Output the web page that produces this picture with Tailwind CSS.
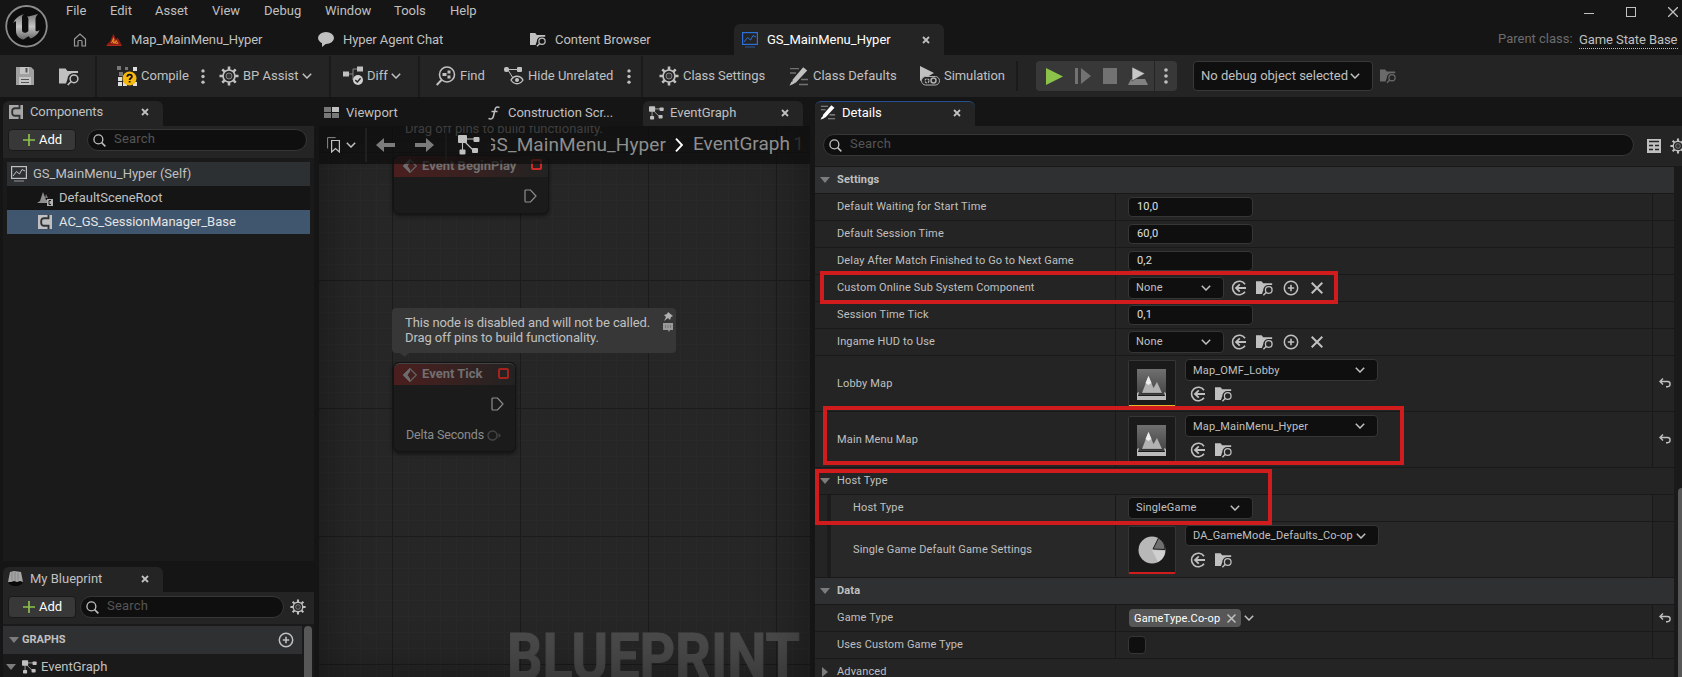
<!DOCTYPE html>
<html lang="en">
<head>
    <meta charset="UTF-8">
    <meta name="viewport" content="width=device-width, initial-scale=1.0">
    <title>GS_MainMenu_Hyper</title>
    <script src="https://cdn.jsdelivr.net/npm/@tailwindcss/browser@4"></script>
</head>
<body class="w-[1682px] h-[677px] overflow-hidden bg-[#151515] font-[Roboto,sans-serif] text-[13px] leading-4 text-[#c0c0c0] whitespace-nowrap">
    <!-- Icon sprites -->
    <svg class="absolute w-0 h-0">
        <symbol id="chev" viewBox="0 0 10 6"><path d="M.8.8 5 5 9.2.8" fill="none" stroke="currentColor" stroke-width="1.5"/></symbol>
        <symbol id="close" viewBox="0 0 8 8"><path d="M1 1l6 6M7 1L1 7" stroke="currentColor" stroke-width="1.8"/></symbol>
        <symbol id="clear" viewBox="0 0 12 12"><path d="M.7.7l10.6 10.6M11.3.7L.7 11.3" stroke="currentColor" stroke-width="2"/></symbol>
        <symbol id="dots" viewBox="0 0 4 16"><circle cx="2" cy="2" r="1.8" fill="currentColor"/><circle cx="2" cy="8" r="1.8" fill="currentColor"/><circle cx="2" cy="14" r="1.8" fill="currentColor"/></symbol>
        <symbol id="mag" viewBox="0 0 14 14"><circle cx="5.8" cy="5.8" r="4.8" fill="none" stroke="currentColor" stroke-width="1.4"/><path d="M9.3 9.3l4 4" stroke="currentColor" stroke-width="1.6"/></symbol>
        <symbol id="gear" viewBox="0 0 20 20"><g stroke="currentColor" stroke-width="2.6"><path d="M10 .5v4M10 15.500v4M.5 10h4M15.500 10h4M3.300 3.300l2.800 2.800M13.900 13.900l2.800 2.800M3.300 16.700l2.800-2.800M13.900 6.100l2.800-2.800"/></g><circle cx="10" cy="10" r="6" fill="#242424" stroke="currentColor" stroke-width="1.700"/><circle cx="10" cy="10" r="3" fill="#333" stroke="currentColor" stroke-opacity=".6" stroke-width="1"/></symbol>
        <symbol id="folder" viewBox="0 0 20 18"><path d="M0 1h6.500l2 2.500H19v2h-4.500a6 6 0 0 0-6 6l-1.500 4.500H0z" fill="currentColor"/><circle cx="15" cy="11.300" r="3.900" fill="none" stroke="currentColor" stroke-width="1.500"/><path d="M12.200 14l-3.500 3.500" stroke="currentColor" stroke-width="1.700"/></symbol>
        <symbol id="use" viewBox="0 0 16 16"><path d="M14 4.200A6.800 6.800 0 1 0 14 11.800" fill="none" stroke="currentColor" stroke-width="1.600"/><path d="M15 8H5.500M8.800 4.400L5 8l3.800 3.600" fill="none" stroke="currentColor" stroke-width="1.800"/></symbol>
        <symbol id="plusc" viewBox="0 0 16 16"><circle cx="8" cy="8" r="6.700" fill="none" stroke="currentColor" stroke-width="1.500"/><path d="M8 4.800v6.400M4.800 8h6.400" stroke="currentColor" stroke-width="1.600"/></symbol>
        <symbol id="plus" viewBox="0 0 12 12"><path d="M6 0v12M0 6h12" stroke="#8bc24a" stroke-width="1.700"/></symbol>
        <symbol id="reset" viewBox="0 0 12 10"><path d="M4 .5L1 3.500l3 3M1 3.500h7.500a2.600 2.600 0 0 1 0 5.200H7" fill="none" stroke="currentColor" stroke-width="1.400"/></symbol>
        <symbol id="graph" viewBox="0 0 22 20"><path d="M5 4h13M7 7l8 8M4.500 7v9" stroke="currentColor" stroke-width="1.100"/><rect x="0" y="0" width="9" height="8" rx="1" fill="currentColor"/><rect x="15.500" y="2" width="6" height="5" rx="1" fill="currentColor"/><rect x="1.500" y="14.500" width="6" height="5" rx="1" fill="currentColor"/><rect x="14" y="13" width="6" height="5" rx="1" fill="currentColor"/></symbol>
        <symbol id="bp" viewBox="0 0 16 16"><rect x=".6" y=".6" width="14.800" height="11.800" fill="none" stroke="currentColor" stroke-width="1.200"/><path d="M2 10l3.500-4.500 3 2.500 2.500-4.500L14 5" fill="none" stroke="currentColor" stroke-width="1"/><path d="M3 15h10" stroke="currentColor" stroke-opacity=".5" stroke-width="1.400"/></symbol>
        <symbol id="comp" viewBox="0 0 14 14"><path d="M0 0h14v14H0z" fill="currentColor"/><path d="M9.500 3.200H6a2.800 2.800 0 0 0-2.800 2.800v2A2.800 2.800 0 0 0 6 10.800h3.500M10.500 0v4.200M10.500 9.800V14" fill="none" stroke="#303336" stroke-width="1.900"/></symbol>
        <symbol id="pencil" viewBox="0 0 20 19"><path d="M1 1.700h9M1 6h6M12 12.500h7M10 17.500h9" stroke="currentColor" stroke-opacity=".5" stroke-width="1.300"/><path d="M14.200.3l4 3.200L7 15.500 2.500 17.700 3.800 12.500z" fill="currentColor"/><path d="M.5 18.700l2-4.200 2.500 2z" fill="currentColor"/></symbol>
        <symbol id="tri" viewBox="0 0 10 6"><path d="M0 0h10L5 6z" fill="#7c7c7c"/></symbol>
        <symbol id="exec" viewBox="0 0 13 14"><path d="M1 2a1 1 0 0 1 1-1h4.500L12 7l-5.500 6H2a1 1 0 0 1-1-1z" fill="none" stroke="#8e8e8e" stroke-width="1.200"/></symbol>
        <symbol id="event" viewBox="0 0 14 14"><path d="M7 .7L13.300 7 7 13.300.7 7z" fill="none" stroke="#626262" stroke-width="1.300"/><path d="M7 0v3.500L4.500 7 7 10.500V14L0 7z" fill="#6d6d6d"/></symbol>
        <linearGradient id="lg" x2="0" y2="1"><stop stop-color="#707070"/><stop offset="1" stop-color="#444"/></linearGradient>
        <symbol id="level" viewBox="0 0 29 31"><path d="M0 0h29v26H0z" fill="url(#lg)"/><path d="M5 24l6.500-17 5 12 3.500-6 5 11z" fill="#b2b2b2"/><path d="M8.500 14l3-7 3 7-3 2z" fill="#eee"/><path d="M3.500 24.500h22" stroke="#333" stroke-width="1.200"/><path d="M0 31v-7l2-1-1 4h27l-1-4 2 1v7z" fill="#bbb"/></symbol>
    </svg>

    <!-- Title bar: logo, menu, asset tabs -->
    <header class="flex h-[55px]">
        <svg class="w-[44px] h-[44px] mt-1 ml-[4px] shrink-0" viewBox="0 0 44 44">
            <linearGradient id="ug" x2="0" y2="1"><stop stop-color="#777"/><stop offset=".5" stop-color="#c4c4c4"/><stop offset="1" stop-color="#666"/></linearGradient>
            <circle cx="22.500" cy="22.300" r="20.300" fill="#0d0d0d" stroke="#8c8c8c" stroke-width="1.800"/>
            <path d="M9 19.500c2-5 6-8 11-9.500-1.600 1.300-2 2.200-2 3.500v12.500c0 1.800 1.200 2.700 2.800 2.700 1.500 0 2.600-.7 3.600-1.800V15c0-1.300-.5-2-1.800-2.300 4-.6 7.500-1.700 11.600-3-1.800 2-2.700 3.500-2.700 5.500v10.500c0 1.300.8 1.700 1.800 1.500.8-.2 1.600-.7 2.300-1.300-1.600 4.300-5 7-9 8.500l-2.200-2.200-4.800 3.300c-4.500-.5-7.600-3.800-7.600-8.500v-9c0-1.300-1.200-1.300-3 1.500z" fill="url(#ug)"/>
        </svg>
        <div class="flex-1">
            <nav class="flex h-6 pl-[18px] pt-[3px]">
                <span class="w-[44px]">File</span><span class="w-[45px]">Edit</span><span class="w-[57px]">Asset</span><span class="w-[52px]">View</span><span class="w-[61px]">Debug</span><span class="w-[69px]">Window</span><span class="w-[56px]">Tools</span><span>Help</span>
                <div class="ml-auto flex items-center mr-[4px] -mt-[3px] gap-[32px]">
                    <div class="w-[10px] h-px bg-[#c0c0c0] mt-[2px]"></div>
                    <div class="w-[10px] h-[10px] border border-[#c0c0c0]"></div>
                    <svg class="w-[10px] h-[10px]" viewBox="0 0 10 10"><path d="M0 0l10 10M10 0L0 10" stroke="#c0c0c0" stroke-width="1.300"/></svg>
                </div>
            </nav>
            <div class="flex h-[31px] items-center">
                <svg class="w-[14px] h-[14px] ml-[25px]" viewBox="0 0 14 14"><path d="M1.500 6L7 1l5.500 5v7H9V8.500a1 1 0 0 0-1-1H6a1 1 0 0 0-1 1V13H1.500z" fill="none" stroke="#999" stroke-width="1.200"/></svg>
                <svg class="w-[16px] h-[14px] ml-[19px]" viewBox="0 0 16 14"><path d="M0 13l2.500-3.500h1l4-9 2.500 6 1.500-2 3 5L16 13z" fill="#8f1d14"/><path d="M5 10l2.500-6 1.500 4 1.500-1 2 4z" fill="#e08a22"/><path d="M6 9l1 1M8 7l1 2M10 9l1 1M1 12.500h14" stroke="#b02a1a"/></svg>
                <span class="w-[187px] ml-[9px] tracking-[-.08px]">Map_MainMenu_Hyper</span>
                <svg class="w-[16px] h-[15px]" viewBox="0 0 16 15"><ellipse cx="8" cy="6" rx="8" ry="6" fill="currentColor"/><path d="M4 10v5l5-4z" fill="currentColor"/></svg>
                <span class="w-[187px] ml-[9px] tracking-[-.08px]">Hyper Agent Chat</span>
                <svg class="w-[16px] h-[15px]"><use href="#folder"/></svg>
                <span class="w-[179px] ml-[9px] tracking-[-.05px]">Content Browser</span>
                <div class="flex items-center w-[210px] h-[31px] rounded-t-md bg-[#242424] pl-2 text-white">
                    <svg class="w-[16px] h-[16px] text-[#2d71d8]"><use href="#bp"/></svg>
                    <span class="w-[155px] ml-[9px]">GS_MainMenu_Hyper</span>
                    <svg class="w-[8px] h-[8px] text-[#c0c0c0]"><use href="#close"/></svg>
                </div>
                <span class="ml-auto text-[#6c6c6c] w-[81px] -mt-px">Parent class:</span>
                <span class="w-[99px] mr-[4px] border-b border-dotted border-[#c0c0c0] h-[17px] mt-px tracking-[-.08px]">Game State Base</span>
            </div>
        </div>
    </header>

    <!-- Toolbar -->
    <div class="flex items-center h-[42px] bg-[#242424] [&>*]:shrink-0">
        <svg class="w-[18px] h-[18px] ml-4" viewBox="0 0 18 18"><path d="M0 0h15l3 3v15H0z" fill="#a0a0a0"/><path d="M4 0h9v7H4zM3 10h12v8H3z" fill="#c4c4c4"/><path d="M9.500 1h2v4.500h-2zM5 12h8v1H5zM5 15h8v1H5z" fill="#555"/></svg>
        <svg class="w-[20px] h-[19px] ml-[25px]"><use href="#folder"/></svg>
        <div class="w-[2px] h-[41px] bg-[#1a1a1a] ml-[16px]"></div>
        <svg class="w-[21px] h-[21px] ml-[20px]" viewBox="0 0 21 21"><path d="M0 0h4v4H0zM8 1h3v3H8zM2 6h4v4H2z" fill="#777"/><path d="M16 1h4v4h-4zM1 11h4v4H1zM1 16h4v4H1zM6 16h4v4H6zM16 16h4v4h-4z" fill="#ddd"/><circle cx="12.500" cy="12.500" r="7" fill="#f8b90e"/><path d="M10.300 10.800c0-3 4.600-2.900 4.600-.3 0 1.700-2.300 1.700-2.300 3.400M12.600 15v1.600" fill="none" stroke="#111" stroke-width="1.800"/></svg>
        <span class="ml-[3px] w-[60px]">Compile</span>
        <svg class="w-[4px] h-[15px]"><use href="#dots"/></svg>
        <svg class="w-[20px] h-[20px] ml-[14px]"><use href="#gear"/></svg>
        <span class="ml-[4px] w-[59px]">BP Assist</span>
        <svg class="w-[10px] h-[6px]"><use href="#chev"/></svg>
        <div class="w-[2px] h-[41px] bg-[#1a1a1a] ml-[17px]"></div>
        <svg class="w-[20px] h-[20px] ml-[12px]" viewBox="0 0 20 20"><path d="M3 8h7V3h6M10 8v6" fill="none" stroke="#888"/><path d="M0 5.500h6v5H0zM14 .5h6v5h-6z" fill="#c0c0c0"/><circle cx="15" cy="14" r="5" fill="#d0d0d0"/><path d="M12.300 14l2 2 3.300-3.800" fill="none" stroke="#222" stroke-width="1.400"/></svg>
        <span class="ml-[4px] w-[24px]">Diff</span>
        <svg class="w-[10px] h-[6px]"><use href="#chev"/></svg>
        <div class="w-[2px] h-[41px] bg-[#1a1a1a] ml-[17px]"></div>
        <svg class="w-[20px] h-[20px] ml-[16px]" viewBox="0 0 20 20"><circle cx="11" cy="8.500" r="7.500" fill="none" stroke="#c0c0c0" stroke-width="1.600"/><path d="M5.500 14L.7 19" stroke="#c0c0c0" stroke-width="2"/><path d="M6.500 7h4v3h-4zM11.500 4.500h3v3h-3zM11.500 9.500h3v3h-3z" fill="#c0c0c0"/></svg>
        <span class="ml-[4px] w-[43px]">Find</span>
        <svg class="w-[20px] h-[18px] ml-px" viewBox="0 0 20 18"><path d="M3 2.500h13M4 3l5 8" fill="none" stroke="#c0c0c0"/><rect y="0" width="5" height="5" rx="2" fill="#c0c0c0"/><rect x="13" y="0" width="5" height="5" rx="1" fill="#c0c0c0"/><path d="M7 13c3-5 9-5 12 0-3 5-9 5-12 0z" fill="#242424" stroke="#c0c0c0" stroke-width="1.400"/><circle cx="13" cy="13" r="2" fill="#c0c0c0"/></svg>
        <span class="ml-[4px] w-[99px]">Hide Unrelated</span>
        <svg class="w-[4px] h-[15px]"><use href="#dots"/></svg>
        <div class="w-[2px] h-[41px] bg-[#1a1a1a] ml-[10px]"></div>
        <svg class="w-[20px] h-[20px] ml-[16px]"><use href="#gear"/></svg>
        <span class="ml-[4px] w-[106px] tracking-[-.05px]">Class Settings</span>
        <svg class="w-[20px] h-[19px]"><use href="#pencil"/></svg>
        <span class="ml-[4px] w-[106px]">Class Defaults</span>
        <svg class="w-[21px] h-[20px]" viewBox="0 0 21 20"><path d="M1 0l14 7L1 15z" fill="#c0c0c0"/><rect x="2.500" y="10.500" width="18" height="8.500" rx="4.200" fill="#242424" stroke="#b0b0b0"/><circle cx="8" cy="14.800" r="2" fill="none" stroke="#b0b0b0" stroke-dasharray="2 1" stroke-width="1.300"/><circle cx="14.500" cy="14.500" r="2.500" fill="none" stroke="#b0b0b0" stroke-width="1.500"/></svg>
        <span class="ml-[4px] w-[72px] tracking-[-.08px]">Simulation</span>
        <div class="w-[2px] h-[30px] bg-[#1a1a1a]"></div>
        <div class="flex items-center ml-[18px] w-[141px] h-[30px] rounded bg-[#383838]">
            <svg class="w-[17px] h-[17px] ml-[10px]" viewBox="0 0 17 17"><path d="M0 0l17 8.500L0 17z" fill="#8bc24a"/></svg>
            <svg class="w-[16px] h-[16px] ml-[12px]" viewBox="0 0 16 16"><path d="M0 0h3v16H0zM6 0l10 8-10 8z" fill="#727272"/></svg>
            <div class="w-[14px] h-[16px] ml-[12px] bg-[#727272]"></div>
            <svg class="w-[20px] h-[18px] ml-[11px]" viewBox="0 0 20 18"><path d="M3 12h14l3 6H0z" fill="#828282"/><path d="M4 0l13 6.500L4 14z" fill="#c8c8c8" stroke="#383838" stroke-width=".6"/></svg>
            <div class="w-px h-[30px] ml-[6px] bg-[#242424]"></div>
            <svg class="w-[4px] h-[16px] ml-[9px]"><use href="#dots"/></svg>
        </div>
        <div class="flex items-center ml-[16px] w-[180px] h-[30px] rounded border border-[#383838] bg-[#0f0f0f] pl-[7px]">
            <span class="w-[149px]">No debug object selected</span>
            <svg class="w-[10px] h-[6px]"><use href="#chev"/></svg>
        </div>
        <svg class="w-[16px] h-[16px] ml-[7px] text-[#6a6a6a]"><use href="#folder"/></svg>
    </div>

    <main class="flex h-[580px]">
        <!-- Left column -->
        <aside class="w-[311px] ml-[3px] shrink-0">
            <div class="mt-1 flex items-center w-[160px] h-[25px] rounded-t-md bg-[#242424] pl-[6px] pb-[3px]">
                <svg class="w-[14px] h-[14px] text-[#a8a8a8]"><use href="#comp"/></svg>
                <span class="ml-[7px] w-[111px] tracking-[-.12px]">Components</span>
                <svg class="w-[8px] h-[8px]"><use href="#close"/></svg>
            </div>
            <div class="flex h-[32px] bg-[#242424] pl-[5px] pt-[3px]">
                <button class="flex items-center w-[68px] h-[22px] rounded border border-[#191919] bg-[#383838] pl-[14px] text-white"><svg class="w-[12px] h-[12px]"><use href="#plus"/></svg><span class="ml-[4px] -mt-px">Add</span></button>
                <div class="flex items-center ml-[11px] w-[220px] h-[22px] rounded-full border border-[#363636] bg-[#0f0f0f] pl-[5px] text-[#555]"><svg class="w-[13px] h-[13px] text-[#c0c0c0]"><use href="#mag"/></svg><span class="ml-[8px] -mt-[2px] tracking-[.2px]">Search</span></div>
            </div>
            <div class="h-[403px] bg-[#1a1a1a] pt-[4px] pl-[4px] pr-[4px]">
                <div class="flex items-center h-[24px] bg-[#2d3033] pl-[4px]"><svg class="w-[16px] h-[16px]"><use href="#bp"/></svg><span class="ml-[6px]">GS_MainMenu_Hyper (Self)</span></div>
                <div class="flex items-center h-[24px] bg-[#151515] pl-[30px]">
                    <svg class="w-[16px] h-[15px]" viewBox="0 0 16 15"><path d="M0 12l3-2 3-9 3 8h1v3z" fill="#909090"/><path d="M9 3l2 4H8z" fill="#777"/><path d="M10 8h6v7h-6z" fill="#b0b0b0"/><path d="M14 9.500h-2v4h2" fill="none" stroke="#151515"/></svg>
                    <span class="ml-[6px] tracking-[-.05px]">DefaultSceneRoot</span>
                </div>
                <div class="flex items-center h-[24px] bg-[#40566e] pl-[31px] text-[#e4e4e4]"><svg class="w-[14px] h-[14px] text-[#c0c0c0]"><use href="#comp"/></svg><span class="ml-[7px]">AC_GS_SessionManager_Base</span></div>
            </div>
            <div class="mt-[6px] flex items-center w-[160px] h-[25px] rounded-t-md bg-[#242424] pl-[5px] pb-[2px]">
                <svg class="w-[15px] h-[15px]" viewBox="0 0 15 15"><path d="M0 9h15l-1 4-4 2H5l-4-2z" fill="#090909"/><path d="M0 11L2 1l4-1 7 1 2 10-3-1-3 1-3-1-3 1z" fill="#a5a5a5"/><path d="M4 1v8M7 1v9M10 2v7" stroke="#777" stroke-width=".7"/></svg>
                <span class="ml-[7px] w-[111px]">My Blueprint</span>
                <svg class="w-[8px] h-[8px]"><use href="#close"/></svg>
            </div>
            <div class="flex h-[32px] bg-[#242424] pl-[5px] pt-[4px]">
                <button class="flex items-center w-[68px] h-[22px] rounded border border-[#191919] bg-[#383838] pl-[14px] text-white"><svg class="w-[12px] h-[12px]"><use href="#plus"/></svg><span class="ml-[4px] -mt-px">Add</span></button>
                <div class="flex items-center ml-[4px] w-[204px] h-[22px] rounded-full border border-[#363636] bg-[#0f0f0f] pl-[5px] text-[#555]"><svg class="w-[13px] h-[13px] text-[#c0c0c0]"><use href="#mag"/></svg><span class="ml-[8px] -mt-[2px] tracking-[.2px]">Search</span></div>
                <svg class="w-[16px] h-[16px] ml-[6px] mt-[3px]"><use href="#gear"/></svg>
            </div>
            <div class="flex h-[53px] bg-[#1a1a1a] pt-[2px]">
                <div class="w-[299px]">
                    <div class="flex items-center h-[28px] bg-[#2f3031] pl-[6px]"><svg class="w-[10px] h-[6px]"><use href="#tri"/></svg><span class="ml-[3px] -mt-px w-[256px] text-[11px] font-bold">GRAPHS</span><svg class="w-[16px] h-[16px]"><use href="#plusc"/></svg></div>
                    <div class="flex items-center h-[25px] pl-[3px]"><svg class="w-[10px] h-[6px]"><use href="#tri"/></svg><svg class="w-[15px] h-[14px] ml-[6px]"><use href="#graph"/></svg><span class="ml-[4px]">EventGraph</span></div>
                </div>
                <div class="w-[8px] ml-[2px] rounded-t bg-[#575757]"></div>
            </div>
        </aside>

        <!-- Graph editor -->
        <section class="w-[491px] ml-[5px] shrink-0">
            <div class="flex items-center h-[29px] pt-[2px]">
                <svg class="w-[15px] h-[11px] ml-[5px]" viewBox="0 0 15 11"><path d="M0 0h7v5H0zM0 6h7v5H0zM8 6h7v5H8z" fill="#777"/><path d="M8 0h7v5H8z" fill="#c0c0c0"/></svg>
                <span class="ml-[7px] w-[142px]">Viewport</span>
                <svg class="w-[12px] h-[14px]" viewBox="0 0 12 14"><path d="M11.500 1.500C8 0 7.300 2 6.800 4.500L5.500 10c-.6 2.500-2 3.500-5 2.500M3.500 5.500h6" fill="none" stroke="currentColor" stroke-width="1.500"/></svg>
                <span class="ml-[8px] w-[135px] tracking-[-.05px]">Construction Scr...</span>
                <div class="flex items-center w-[160px] h-[25px] mt-[2px] rounded-t-md bg-[#242424] pl-[6px] pb-[2px]">
                    <svg class="w-[15px] h-[14px]"><use href="#graph"/></svg>
                    <span class="ml-[6px] w-[111px]">EventGraph</span>
                    <svg class="w-[8px] h-[8px]"><use href="#close"/></svg>
                </div>
            </div>
            <div class="relative h-[551px] overflow-hidden bg-[#262626]">
                <svg class="absolute inset-0 w-full h-full">
                    <defs>
                        <pattern id="fine" x="73" y="10" width="16" height="16" patternUnits="userSpaceOnUse"><path d="M.5 0v16M0 .5h16" stroke="#292929"/></pattern>
                        <pattern id="coarse" x="73" y="26" width="128" height="128" patternUnits="userSpaceOnUse"><path d="M.5 0v128M0 .5h128" stroke="#1b1b1b"/></pattern>
                    </defs>
                    <rect width="100%" height="100%" fill="url(#fine)"/>
                    <rect width="100%" height="100%" fill="url(#coarse)"/>
                    <text x="188" y="553" font-size="65" font-weight="700" textLength="293" lengthAdjust="spacingAndGlyphs" fill="#4a4a4a" stroke="#4a4a4a" stroke-width="1">BLUEPRINT</text>
                </svg>
                <div class="absolute inset-0 shadow-[inset_0_0_50px_rgba(0,0,0,0.4)]"></div>

                <div class="absolute left-[86px] top-[-5px] text-[#b0b0b0]">Drag off pins to build functionality.</div>
                <!-- Event BeginPlay -->
                <div class="absolute left-[74px] top-[29px] w-[156px] h-[59px] rounded-md border border-[#141414] bg-[#1b1b1b] shadow-[0_2px_4px_rgba(0,0,0,0.5)]">
                    <div class="flex items-center h-[21px] rounded-t-md bg-linear-to-r from-[#4b1e1e] to-[#222] pl-[9px] pb-px">
                        <svg class="w-[14px] h-[14px]"><use href="#event"/></svg>
                        <span class="ml-[5px] -mt-px w-[109px] font-bold text-[#707070]">Event BeginPlay</span>
                        <div class="w-[11px] h-[11px] rounded-xs border-2 border-[#d02a24] -mt-[3px]"></div>
                    </div>
                    <svg class="ml-[130px] mt-[12px] w-[13px] h-[14px]"><use href="#exec"/></svg>
                </div>
                <!-- Comment bubble -->
                <div class="absolute left-[73px] top-[182px] w-[284px] h-[45px] rounded bg-[#373737] pl-[13px] pt-[7px] leading-[15px] tracking-[-.11px]">
                    This node is disabled and will not be called.<br>Drag off pins to build functionality.
                    <svg class="absolute left-[8px] top-[45px] w-[9px] h-[4px]" viewBox="0 0 9 4"><path d="M0 0h9L4.500 4z" fill="#373737"/></svg>
                    <svg class="absolute right-[3px] top-[4px] w-[10px] h-[20px]" viewBox="0 0 10 20"><path d="M5 0l5 4-2 1-1 3-2-2-4 3 2-4-2-2 3-1z" fill="#b0b0b0"/><path d="M0 11h10v7H7l-1 2-1-2H0z" fill="#9a9a9a"/><path d="M2.500 13v3M5 13v3M7.500 13v3" stroke="#777"/></svg>
                </div>
                <!-- Event Tick -->
                <div class="absolute left-[74px] top-[236px] w-[123px] h-[90px] rounded-md border border-[#141414] bg-[#1b1b1b] shadow-[0_2px_4px_rgba(0,0,0,0.5)]">
                    <div class="flex items-center h-[22px] rounded-t-md border-t border-[#444] bg-linear-to-r from-[#4b1e1e] to-[#222] pl-[9px]">
                        <svg class="w-[14px] h-[14px]"><use href="#event"/></svg>
                        <span class="ml-[5px] -mt-[2px] w-[76px] font-bold text-[#707070]">Event Tick</span>
                        <div class="w-[11px] h-[11px] rounded-xs border-2 border-[#a4231f] -mt-[2px]"></div>
                    </div>
                    <svg class="ml-[97px] mt-[12px] w-[13px] h-[14px]"><use href="#exec"/></svg>
                    <div class="flex items-center mt-[16px] ml-[12px] text-[#8c8c8c]"><span class="w-[81px] text-[12.5px] tracking-[-.15px]">Delta Seconds</span><svg class="w-[14px] h-[11px]" viewBox="0 0 14 11"><circle cx="5.500" cy="5.500" r="4.500" fill="none" stroke="#444" stroke-width="1.500"/><path d="M11.500 3l2.500 2.500L11.500 8z" fill="#444"/></svg></div>
                </div>

                <!-- Breadcrumb bar -->
                <div class="absolute inset-x-0 top-0 flex items-center h-[38px] bg-[#0d0d0d]/70 text-[#8e8e8e] text-[19px] leading-6">
                    <svg class="w-[14px] h-[16px] ml-[8px]" viewBox="0 0 14 16"><path d="M.6 11.500V.6h8" fill="none" stroke="#888"/><path d="M4.600 3.500h7.800v11.500l-3.900-3.500L4.600 15z" fill="none" stroke="#c0c0c0" stroke-width="1.200"/></svg>
                    <svg class="w-[10px] h-[6px] ml-[5px] text-[#c0c0c0]"><use href="#chev"/></svg>
                    <div class="w-[2px] h-[34px] ml-[9px] bg-[#202020]"></div>
                    <svg class="w-[19px] h-[14px] ml-[9px]" viewBox="0 0 19 14"><path d="M0 7l8-7v5h11v4H8v5z" fill="#7c7c7c"/></svg>
                    <svg class="w-[19px] h-[14px] ml-[20px]" viewBox="0 0 19 14"><path d="M19 7l-8-7v5H0v4h11v5z" fill="#7c7c7c"/></svg>
                    <div class="w-[2px] h-[34px] ml-[11px] bg-[#191919]"></div>
                    <svg class="w-[22px] h-[20px] ml-[11px] text-[#c0c0c0]"><use href="#graph"/></svg>
                    <div class="flex justify-end ml-[11px] w-[175px] overflow-hidden"><span class="tracking-[.1px]">GS_MainMenu_Hyper</span></div>
                    <svg class="w-[8px] h-[14px] ml-[9px] shrink-0" viewBox="0 0 8 14"><path d="M1 .7L7 7l-6 6.300" fill="none" stroke="#fff" stroke-width="1.900"/></svg>
                    <span class="ml-[10px] -mt-[2px]">EventGraph</span>
                    <span class="absolute right-[6px] top-[6px] text-[#2c2c2c]">1</span>
                </div>
            </div>
        </section>

        <!-- Details panel -->
        <section class="relative w-[867px] ml-[5px] shrink-0 text-[11px]">
            <div class="mt-1 flex items-center w-[160px] h-[25px] rounded-t-md bg-[#242424] border-t border-[#24508f] pl-[5px] pb-[3px] text-[13px] text-white">
                <svg class="w-[16px] h-[15px]"><use href="#pencil"/></svg>
                <span class="ml-[6px] w-[111px]">Details</span>
                <svg class="w-[8px] h-[8px] text-[#c0c0c0]"><use href="#close"/></svg>
            </div>
            <div class="flex items-center h-[40px] bg-[#242424] pl-[8px] overflow-hidden [&>*]:shrink-0">
                <div class="flex items-center w-[811px] h-[22px] -mt-[2px] rounded-full border border-[#363636] bg-[#0f0f0f] pl-[5px] text-[13px] text-[#555]"><svg class="w-[13px] h-[13px] text-[#c0c0c0]"><use href="#mag"/></svg><span class="ml-[8px] -mt-[2px] tracking-[.2px]">Search</span></div>
                <svg class="w-[14px] h-[14px] ml-[13px] -mt-px" viewBox="0 0 14 14"><path d="M0 0h14v14H0z" fill="#c0c0c0"/><path d="M2 2.500h10M2 6.500h4M8 6.500h4M2 10.500h4M8 10.500h4" stroke="#242424" stroke-width="1.700"/></svg>
                <svg class="w-[16px] h-[16px] ml-[9px] -mt-px"><use href="#gear"/></svg>
            </div>
            <div class="flex h-[511px] bg-[#1a1a1a]">
                <div class="w-[859px] [&>div]:border-t [&>div]:border-[#191919] [&>div]:flex [&>div]:items-center tracking-[.15px]">
                    <div class="h-[27px] bg-[#2f3031] pl-[5px]"><svg class="w-[10px] h-[6px]"><use href="#tri"/></svg><span class="ml-[7px] font-bold">Settings</span></div>

                    <div class="h-[27px] bg-[#242424]">
                        <span class="w-[300px] pl-[22px]">Default Waiting for Start Time</span>
                        <div class="flex items-center self-stretch w-[538px] border-x border-[#191919] pl-[12px]"><div class="w-[125px] h-[20px] rounded border border-[#363636] bg-[#0f0f0f] pl-[8px] leading-[18px] text-[#e0e0e0]">10,0</div></div>
                    </div>
                    <div class="h-[27px] bg-[#242424]">
                        <span class="w-[300px] pl-[22px]">Default Session Time</span>
                        <div class="flex items-center self-stretch w-[538px] border-x border-[#191919] pl-[12px]"><div class="w-[125px] h-[20px] rounded border border-[#363636] bg-[#0f0f0f] pl-[8px] leading-[18px] text-[#e0e0e0]">60,0</div></div>
                    </div>
                    <div class="h-[27px] bg-[#242424]">
                        <span class="w-[300px] pl-[22px]">Delay After Match Finished to Go to Next Game</span>
                        <div class="flex items-center self-stretch w-[538px] border-x border-[#191919] pl-[12px]"><div class="w-[125px] h-[20px] rounded border border-[#363636] bg-[#0f0f0f] pl-[8px] leading-[18px] text-[#e0e0e0]">0,2</div></div>
                    </div>
                    <div class="h-[27px] bg-[#242424]">
                        <span class="w-[300px] pl-[22px]">Custom Online Sub System Component</span>
                        <div class="flex items-center self-stretch w-[538px] border-x border-[#191919] pl-[12px]">
                            <div class="flex items-center w-[96px] h-[22px] rounded border border-[#363636] bg-[#0f0f0f] pl-[7px]"><span class="w-[65px] -mt-px">None</span><svg class="w-[10px] h-[6px]"><use href="#chev"/></svg></div>
                            <svg class="w-[16px] h-[16px] ml-[7px]"><use href="#use"/></svg>
                            <svg class="w-[17px] h-[16px] ml-[9px]"><use href="#folder"/></svg>
                            <svg class="w-[16px] h-[16px] ml-[10px]"><use href="#plusc"/></svg>
                            <svg class="w-[12px] h-[12px] ml-[12px]"><use href="#clear"/></svg>
                        </div>
                    </div>
                    <div class="h-[27px] bg-[#242424]">
                        <span class="w-[300px] pl-[22px]">Session Time Tick</span>
                        <div class="flex items-center self-stretch w-[538px] border-x border-[#191919] pl-[12px]"><div class="w-[125px] h-[20px] rounded border border-[#363636] bg-[#0f0f0f] pl-[8px] leading-[18px] text-[#e0e0e0]">0,1</div></div>
                    </div>
                    <div class="h-[27px] bg-[#242424]">
                        <span class="w-[300px] pl-[22px]">Ingame HUD to Use</span>
                        <div class="flex items-center self-stretch w-[538px] border-x border-[#191919] pl-[12px]">
                            <div class="flex items-center w-[96px] h-[22px] rounded border border-[#363636] bg-[#0f0f0f] pl-[7px]"><span class="w-[65px] -mt-px">None</span><svg class="w-[10px] h-[6px]"><use href="#chev"/></svg></div>
                            <svg class="w-[16px] h-[16px] ml-[7px]"><use href="#use"/></svg>
                            <svg class="w-[17px] h-[16px] ml-[9px]"><use href="#folder"/></svg>
                            <svg class="w-[16px] h-[16px] ml-[10px]"><use href="#plusc"/></svg>
                            <svg class="w-[12px] h-[12px] ml-[12px]"><use href="#clear"/></svg>
                        </div>
                    </div>
                    <div class="h-[56px] bg-[#242424]">
                        <span class="w-[300px] pl-[22px]">Lobby Map</span>
                        <div class="flex self-stretch w-[538px] border-x border-[#191919] pl-[12px] pt-[3px]">
                            <div class="w-[48px] h-[47px] mt-px rounded-xs border border-[#363636] border-b-2 border-b-[#e8b32c] bg-[#1a1a1a] pt-[8px] pl-[8px]"><svg class="w-[29px] h-[31px]"><use href="#level"/></svg></div>
                            <div class="ml-[9px]">
                                <div class="flex items-center w-[193px] h-[22px] rounded border border-[#363636] bg-[#0f0f0f] pl-[7px]"><span class="w-[162px] pt-px">Map_OMF_Lobby</span><svg class="w-[10px] h-[6px]"><use href="#chev"/></svg></div>
                                <div class="flex mt-[5px] pl-[5px]"><svg class="w-[16px] h-[16px]"><use href="#use"/></svg><svg class="w-[17px] h-[16px] ml-[9px]"><use href="#folder"/></svg></div>
                            </div>
                        </div>
                        <svg class="w-[12px] h-[10px] ml-[6px] -mt-px"><use href="#reset"/></svg>
                    </div>
                    <div class="h-[56px] bg-[#242424]">
                        <span class="w-[300px] pl-[22px]">Main Menu Map</span>
                        <div class="flex self-stretch w-[538px] border-x border-[#191919] pl-[12px] pt-[3px]">
                            <div class="w-[48px] h-[48px] mt-px rounded-xs border border-[#363636] bg-[#1a1a1a] pt-[8px] pl-[8px]"><svg class="w-[29px] h-[31px]"><use href="#level"/></svg></div>
                            <div class="ml-[9px]">
                                <div class="flex items-center w-[193px] h-[22px] rounded border border-[#363636] bg-[#0f0f0f] pl-[7px]"><span class="w-[162px] pt-px">Map_MainMenu_Hyper</span><svg class="w-[10px] h-[6px]"><use href="#chev"/></svg></div>
                                <div class="flex mt-[5px] pl-[5px]"><svg class="w-[16px] h-[16px]"><use href="#use"/></svg><svg class="w-[17px] h-[16px] ml-[9px]"><use href="#folder"/></svg></div>
                            </div>
                        </div>
                        <svg class="w-[12px] h-[10px] ml-[6px] -mt-px"><use href="#reset"/></svg>
                    </div>
                    <div class="h-[27px] bg-[#242424] pl-[5px]"><svg class="w-[10px] h-[6px]"><use href="#tri"/></svg><span class="ml-[7px]">Host Type</span></div>
                    <div class="h-[27px] bg-[#282828]">
                        <div class="self-stretch w-[16px] bg-[#242424] border-r-4 border-[#1c1c1c]"></div>
                        <span class="w-[284px] pl-[22px]">Host Type</span>
                        <div class="flex items-center self-stretch w-[538px] border-x border-[#191919] pl-[12px]"><div class="flex items-center w-[125px] h-[22px] rounded border border-[#363636] bg-[#0f0f0f] pl-[7px]"><span class="w-[94px] -mt-px">SingleGame</span><svg class="w-[10px] h-[6px]"><use href="#chev"/></svg></div></div>
                        <div class="self-stretch flex-1 bg-[#242424]"></div>
                    </div>
                    <div class="h-[56px] bg-[#282828]">
                        <div class="self-stretch w-[16px] bg-[#242424] border-r-4 border-[#1c1c1c]"></div>
                        <span class="w-[284px] pl-[22px]">Single Game Default Game Settings</span>
                        <div class="flex self-stretch w-[538px] border-x border-[#191919] pl-[12px] pt-[3px]">
                            <div class="flex justify-center w-[48px] h-[48px] mt-px rounded-xs border border-[#363636] border-b-2 border-b-[#d01c1c] bg-[#1a1a1a] pt-[9px]">
                                <svg class="w-[28px] h-[28px]" viewBox="0 0 28 28"><circle cx="14" cy="14" r="13.500" fill="#b8b8b8"/><path d="M14 14l13 1a13 13 0 0 1-7 11z" fill="#d0d0d0"/><path d="M15 13L20.500 2A13 13 0 0 1 27 13.500z" fill="#707070" stroke="#1a1a1a"/></svg>
                            </div>
                            <div class="ml-[9px]">
                                <div class="flex items-center w-[194px] h-[21px] rounded border border-[#363636] bg-[#0f0f0f] pl-[7px]"><span class="w-[163px] pt-px">DA_GameMode_Defaults_Co-op</span><svg class="w-[10px] h-[6px]"><use href="#chev"/></svg></div>
                                <div class="flex mt-[6px] pl-[5px]"><svg class="w-[16px] h-[16px]"><use href="#use"/></svg><svg class="w-[17px] h-[16px] ml-[9px]"><use href="#folder"/></svg></div>
                            </div>
                        </div>
                        <div class="self-stretch flex-1 bg-[#242424]"></div>
                    </div>
                    <div class="h-[27px] bg-[#2f3031] pl-[5px]"><svg class="w-[10px] h-[6px]"><use href="#tri"/></svg><span class="ml-[7px] font-bold">Data</span></div>
                    <div class="h-[27px] bg-[#242424]">
                        <span class="w-[300px] pl-[22px]">Game Type</span>
                        <div class="flex items-center self-stretch w-[538px] border-x border-[#191919] pl-[13px]">
                            <div class="flex items-center w-[112px] h-[18px] rounded bg-[#575757] pl-[5px] text-white"><span class="w-[93px] pt-px">GameType.Co-op</span><svg class="w-[9px] h-[9px] text-[#c0c0c0]" viewBox="0 0 12 12"><use href="#clear"/></svg></div>
                            <svg class="w-[10px] h-[6px] ml-[3px]"><use href="#chev"/></svg>
                        </div>
                        <svg class="w-[12px] h-[10px] ml-[6px]"><use href="#reset"/></svg>
                    </div>
                    <div class="h-[27px] bg-[#242424]">
                        <span class="w-[300px] pl-[22px]">Uses Custom Game Type</span>
                        <div class="flex items-center self-stretch w-[538px] border-x border-[#191919] pl-[12px]"><div class="w-[18px] h-[18px] rounded border border-[#363636] bg-[#0f0f0f]"></div></div>
                    </div>
                    <div class="h-[27px] bg-[#242424] pl-[7px]"><svg class="w-[6px] h-[10px]" viewBox="0 0 6 10"><path d="M0 0l6 5-6 5z" fill="#7c7c7c"/></svg><span class="ml-[9px] -mt-px">Advanced</span></div>
                </div>
                <div class="w-[4px] ml-[4px] mt-[322px] rounded-tl bg-[#575757]"></div>
            </div>

            <!-- Callouts -->
            <div class="absolute left-[5px] top-[174px] w-[518px] h-[33px] border-4 border-[#d01c1c]"></div>
            <div class="absolute left-[8px] top-[309px] w-[581px] h-[59px] border-4 border-[#d01c1c]"></div>
            <div class="absolute left-0 top-[372px] w-[457px] h-[56px] border-4 border-[#d01c1c]"></div>
        </section>
    </main>
</body>
</html>
